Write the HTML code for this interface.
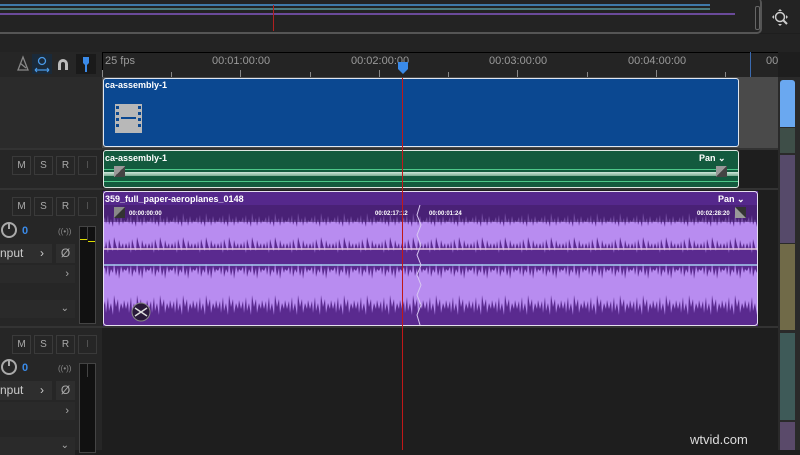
<!DOCTYPE html>
<html><head><style>
*{margin:0;padding:0;box-sizing:border-box}
body{width:800px;height:450px;overflow:hidden;background:#1e1e1e;position:relative;font-family:"Liberation Sans",sans-serif}
.a{position:absolute}
.btn{position:absolute;width:19px;height:19px;border:1px solid #3a3a3a;background:#262626;color:#aaa;font-size:10px;text-align:center;line-height:17px}
.tc{position:absolute;top:55px;font-size:11px;color:#9a9a9a;white-space:nowrap}
.tk{position:absolute;width:1px;background:#888;}
.w{color:#fff;font-size:9px;font-weight:bold}
</style></head><body>
<div class="a" style="left:0;top:0;width:800px;height:33px;background:#232323"></div>
<div class="a" style="left:0;top:-2px;width:762px;height:36px;border:2px solid #555;border-left:none;border-top:none;border-radius:0 5px 5px 0"></div>
<div class="a" style="left:0;top:4px;width:710px;height:2px;background:#3f78a8"></div>
<div class="a" style="left:0;top:8px;width:710px;height:2px;background:#4a7a80"></div>
<div class="a" style="left:0;top:13px;width:735px;height:2px;background:#6a4a9a"></div>
<div class="a" style="left:273px;top:5px;width:1px;height:26px;background:#b02020"></div>
<div class="a" style="left:755px;top:6px;width:5px;height:24px;border:1px solid #666;border-radius:2px"></div>
<svg class="a" style="left:771px;top:8px" width="20" height="20"><circle cx="9" cy="9" r="4.5" fill="none" stroke="#ccc" stroke-width="1.5"/><line x1="12" y1="12" x2="16" y2="16" stroke="#ccc" stroke-width="2"/><path d="M9 1l-2 2h4zM9 18l-2-2h4zM1 9l2-2v4zM17 9l-2-2v4z" fill="#ccc"/></svg>
<div class="a" style="left:0;top:34px;width:800px;height:18px;background:#232323"></div>
<div class="a" style="left:0;top:52px;width:102px;height:25px;background:#262626"></div>
<svg class="a" style="left:12px;top:53px" width="90" height="22">
<path d="M6 17L11 4L16 17Z M6 17h10 M8 10l6 5" stroke="#888" fill="none" stroke-width="1.3"/>
<rect x="20" y="1" width="20" height="20" fill="#1a2a3a"/>
<circle cx="30" cy="8" r="3.5" fill="none" stroke="#4a9ae8" stroke-width="1.3"/><path d="M23 17h14 M23 17l2-2 M23 17l2 2 M37 17l-2-2 M37 17l-2 2" stroke="#4a9ae8" fill="none" stroke-width="1.2"/>
<path d="M46 17v-6a5 5 0 0 1 10 0v6h-3v-6a2 2 0 0 0-4 0v6z" fill="#bbb"/>
<rect x="64" y="1" width="20" height="20" fill="#1a1a1a"/>
<path d="M71 4h6v6l-2 2v7h-2v-7l-2-2z" fill="#3a8ae8"/>
</svg>
<div class="a" style="left:102px;top:52px;width:676px;height:26px;background:#242424;border-top:1px solid #000;border-left:1px solid #000"></div>
<div class="tc" style="left:105px">25 fps</div>
<div class="tc" style="left:212px">00:01:00:00</div>
<div class="tc" style="left:351px">00:02:00:00</div>
<div class="tc" style="left:489px">00:03:00:00</div>
<div class="tc" style="left:628px">00:04:00:00</div>
<div class="tc" style="left:766px">00</div>
<div class="tk" style="left:102px;top:70px;height:7px"></div>
<div class="tk" style="left:171px;top:72px;height:5px"></div>
<div class="tk" style="left:240px;top:70px;height:7px"></div>
<div class="tk" style="left:310px;top:72px;height:5px"></div>
<div class="tk" style="left:379px;top:70px;height:7px"></div>
<div class="tk" style="left:448px;top:72px;height:5px"></div>
<div class="tk" style="left:517px;top:70px;height:7px"></div>
<div class="tk" style="left:587px;top:72px;height:5px"></div>
<div class="tk" style="left:656px;top:70px;height:7px"></div>
<div class="tk" style="left:725px;top:72px;height:5px"></div>
<div class="a" style="left:750px;top:52px;width:1px;height:26px;background:#3a6ab0"></div>
<div class="a" style="left:0;top:77px;width:102px;height:71px;background:#2b2b2b"></div>
<div class="a" style="left:102px;top:77px;width:676px;height:71px;background:#4a4a4a"></div>
<div class="a" style="left:103px;top:78px;width:636px;height:69px;background:#0b4891;border:1px solid #dfe6f0;border-radius:3px"></div>
<div class="a w" style="left:105px;top:80px">ca-assembly-1</div>
<svg class="a" style="left:115px;top:104px" width="27" height="29"><rect width="27" height="29" fill="#b8b8b8"/><g fill="#0b4891"><rect x="1" y="2" width="3" height="3"/><rect x="1" y="8" width="3" height="3"/><rect x="1" y="14" width="3" height="3"/><rect x="1" y="20" width="3" height="3"/><rect x="23" y="2" width="3" height="3"/><rect x="23" y="8" width="3" height="3"/><rect x="23" y="14" width="3" height="3"/><rect x="23" y="20" width="3" height="3"/><rect x="6" y="13" width="15" height="2"/></g></svg>
<div class="a" style="left:0;top:148px;width:778px;height:2px;background:#333"></div>
<div class="a" style="left:0;top:150px;width:102px;height:38px;background:#262626"></div>
<div class="btn" style="left:12px;top:156px">M</div><div class="btn" style="left:34px;top:156px">S</div><div class="btn" style="left:56px;top:156px">R</div><div class="btn" style="left:78px;top:156px;color:#555">I</div>
<div class="a" style="left:103px;top:150px;width:636px;height:38px;background:#135a3e;border:1px solid #e0e8e4;border-radius:3px"></div>
<div class="a w" style="left:105px;top:153px">ca-assembly-1</div>
<div class="a w" style="left:699px;top:153px">Pan ⌄</div>
<div class="a" style="left:104px;top:169px;width:634px;height:1px;background:#4ec88a"></div>
<div class="a" style="left:104px;top:172px;width:634px;height:4px;background:linear-gradient(#d0e8dc,#7aaa90)"></div>
<div class="a" style="left:104px;top:181px;width:634px;height:1px;background:#4ec88a"></div>
<div class="a" style="left:114px;top:166px;width:11px;height:11px;background:linear-gradient(135deg,#999 50%,#444 50%)"></div>
<div class="a" style="left:716px;top:166px;width:11px;height:11px;background:linear-gradient(135deg,#999 50%,#444 50%)"></div>
<div class="a" style="left:0;top:188px;width:778px;height:2px;background:#333"></div>
<div class="a" style="left:0;top:190px;width:102px;height:137px;background:#262626"></div>
<div class="btn" style="left:12px;top:197px">M</div><div class="btn" style="left:34px;top:197px">S</div><div class="btn" style="left:56px;top:197px">R</div><div class="btn" style="left:78px;top:197px;color:#555">I</div>
<svg class="a" style="left:0;top:220px" width="80" height="20"><circle cx="9" cy="10" r="7" fill="none" stroke="#aaa" stroke-width="2"/><line x1="9" y1="3" x2="9" y2="9" stroke="#aaa" stroke-width="2"/><text x="22" y="14" fill="#3a8ae8" font-size="11" font-weight="bold" font-family="Liberation Sans">0</text><text x="58" y="14" fill="#888" font-size="8" font-family="Liberation Sans">((•))</text></svg>
<div class="a" style="left:0;top:244px;width:52px;height:19px;background:#2e2e2e;color:#ccc;font-size:12px;line-height:19px">nput <span style="position:absolute;left:40px">›</span></div>
<div class="a" style="left:56px;top:244px;width:19px;height:19px;background:#2e2e2e;color:#aaa;font-size:12px;text-align:center;line-height:19px">Ø</div>
<div class="a" style="left:0;top:265px;width:75px;height:18px;background:#2a2a2a;color:#aaa;font-size:11px;line-height:18px;text-align:right;padding-right:6px">›</div>
<div class="a" style="left:0;top:300px;width:75px;height:18px;background:#2a2a2a;color:#aaa;font-size:10px;line-height:18px;text-align:right;padding-right:6px">⌄</div>
<div class="a" style="left:79px;top:226px;width:17px;height:98px;background:#111;border:1px solid #444"></div>
<div class="a" style="left:87px;top:226px;width:1px;height:14px;background:#444"></div>
<div class="a" style="left:80px;top:239px;width:7px;height:1px;background:#dd0"></div>
<div class="a" style="left:88px;top:241px;width:7px;height:1px;background:#dd0"></div>
<div class="a" style="left:102px;top:190px;width:676px;height:137px;background:#1e1e1e"></div>
<svg class="a" style="left:103px;top:191px" width="655" height="135">
<defs>
<pattern id="p1" width="23" height="135" patternUnits="userSpaceOnUse">
<path d="M0 31 L2 26 L3 33 L5 24 L6 34 L8 28 L10 36 L11 22 L13 32 L15 27 L16 35 L18 25 L20 33 L21 29 L23 31 V0 H0Z" fill="#5a2a8f"/>
<path d="M0 52 L2 58 L3 50 L5 62 L6 48 L8 56 L10 60 L11 46 L13 54 L15 60 L16 49 L18 57 L20 52 L21 59 L23 52 V73 H0Z" fill="#5a2a8f"/>
<path d="M0 80 L2 76 L3 84 L5 74 L6 86 L8 78 L10 82 L11 72 L13 85 L15 77 L16 88 L18 75 L20 82 L21 78 L23 80 V73 H0Z" fill="#5a2a8f"/>
<path d="M0 118 L2 110 L3 122 L5 106 L6 120 L8 112 L10 124 L11 104 L13 116 L15 108 L16 122 L18 112 L20 118 L21 109 L23 118 V135 H0Z" fill="#5a2a8f"/>
</pattern>
</defs>
<rect width="655" height="135" fill="#b88cf0"/>
<rect width="655" height="135" fill="url(#p1)"/>
<rect x="0" y="14" width="655" height="17" fill="#3c1a62" opacity=".55"/>
<rect x="0" y="0" width="655" height="14" fill="#55288c"/>
<line x1="0" y1="58" x2="655" y2="58" stroke="#e8c8e0" stroke-width="1.5"/>
<line x1="0" y1="74" x2="655" y2="74" stroke="#a8d0f0" stroke-width="1.5"/>
<path d="M317 14 L314 24 L318 34 L314 44 L318 54 L314 64 L318 74 L314 84 L318 94 L314 104 L318 114 L314 124 L317 134" stroke="#d8c8f0" fill="none"/>
<rect x="0.5" y="0.5" width="654" height="134" rx="3" fill="none" stroke="#e6def0"/>
<rect x="11" y="16" width="11" height="11" fill="#888"/><path d="M11 27 L22 16 V27Z" fill="#333"/>
<rect x="632" y="16" width="11" height="11" fill="#333"/><path d="M632 16 L643 27 H632Z" fill="#999"/>
<circle cx="38" cy="121" r="9" fill="#2a1a3a" stroke="#888"/><path d="M32 117l12 8 M32 125l12-8" stroke="#ddd" stroke-width="1.5"/>
</svg>
<div class="a w" style="left:105px;top:194px;font-size:9px">359_full_paper-aeroplanes_0148</div>
<div class="a w" style="left:718px;top:194px">Pan ⌄</div>
<div class="a w" style="left:129px;top:211px;font-size:6px">00:00:00:00</div>
<div class="a w" style="left:375px;top:211px;font-size:6px">00:02:17:12</div>
<div class="a w" style="left:429px;top:211px;font-size:6px">00:00:01:24</div>
<div class="a w" style="left:697px;top:211px;font-size:6px">00:02:28:20</div>
<div class="a" style="left:0;top:326px;width:778px;height:2px;background:#333"></div>
<div class="a" style="left:0;top:328px;width:102px;height:122px;background:#262626"></div>
<div class="btn" style="left:12px;top:335px">M</div><div class="btn" style="left:34px;top:335px">S</div><div class="btn" style="left:56px;top:335px">R</div><div class="btn" style="left:78px;top:335px;color:#555">I</div>
<svg class="a" style="left:0;top:357px" width="80" height="20"><circle cx="9" cy="10" r="7" fill="none" stroke="#aaa" stroke-width="2"/><line x1="9" y1="3" x2="9" y2="9" stroke="#aaa" stroke-width="2"/><text x="22" y="14" fill="#3a8ae8" font-size="11" font-weight="bold" font-family="Liberation Sans">0</text><text x="58" y="14" fill="#888" font-size="8" font-family="Liberation Sans">((•))</text></svg>
<div class="a" style="left:0;top:381px;width:52px;height:19px;background:#2e2e2e;color:#ccc;font-size:12px;line-height:19px">nput <span style="position:absolute;left:40px">›</span></div>
<div class="a" style="left:56px;top:381px;width:19px;height:19px;background:#2e2e2e;color:#aaa;font-size:12px;text-align:center;line-height:19px">Ø</div>
<div class="a" style="left:0;top:402px;width:75px;height:18px;background:#2a2a2a;color:#aaa;font-size:11px;line-height:18px;text-align:right;padding-right:6px">›</div>
<div class="a" style="left:0;top:437px;width:75px;height:18px;background:#2a2a2a;color:#aaa;font-size:10px;line-height:18px;text-align:right;padding-right:6px">⌄</div>
<div class="a" style="left:79px;top:363px;width:17px;height:90px;background:#111;border:1px solid #444"></div>
<div class="a" style="left:87px;top:363px;width:1px;height:14px;background:#444"></div>
<div class="a" style="left:402px;top:78px;width:1px;height:372px;background:#c01818"></div>
<svg class="a" style="left:398px;top:62px" width="10" height="12"><path d="M0 0h10v7l-5 5l-5-5z" fill="#3a8ae8"/></svg>
<div class="a" style="left:778px;top:77px;width:22px;height:373px;background:#2a2a2a"></div>
<div class="a" style="left:780px;top:80px;width:15px;height:47px;background:#6aa8f0;border-radius:3px 3px 0 0"></div>
<div class="a" style="left:780px;top:128px;width:15px;height:25px;background:#3e4e48"></div>
<div class="a" style="left:780px;top:155px;width:15px;height:88px;background:#564a6a"></div>
<div class="a" style="left:780px;top:244px;width:15px;height:86px;background:#706a48"></div>
<div class="a" style="left:780px;top:333px;width:15px;height:87px;background:#3e5a58"></div>
<div class="a" style="left:780px;top:422px;width:15px;height:28px;background:#5a4a6a"></div>
<div class="a" style="left:690px;top:432px;color:#ddd;font-size:13px">wtvid.com</div>
</body></html>
